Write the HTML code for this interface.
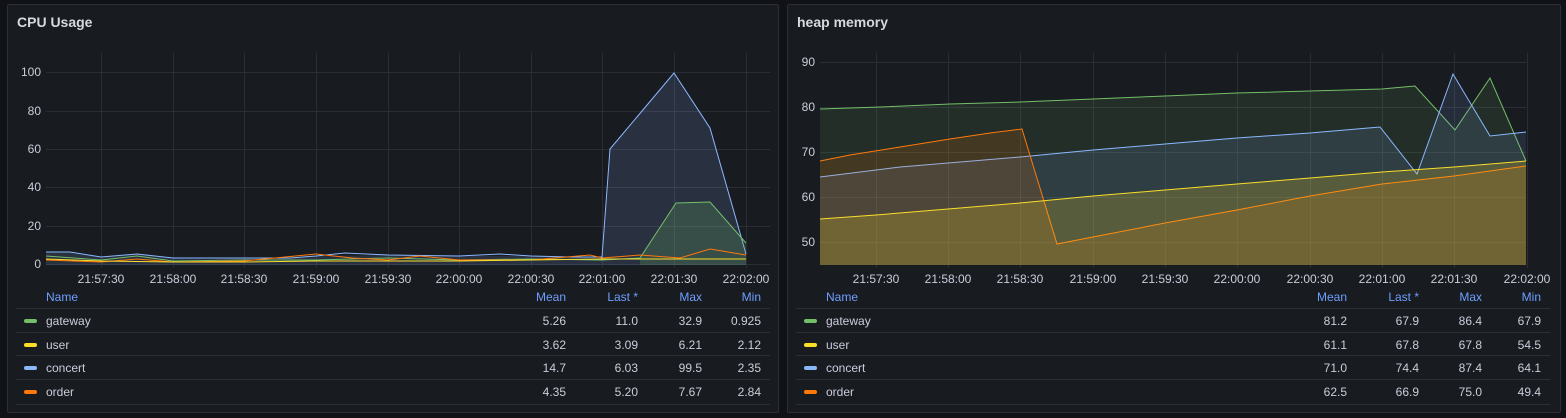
<!DOCTYPE html>
<html><head><style>
body{margin:0;width:1566px;height:418px;background:#111217;font-family:"Liberation Sans",sans-serif;overflow:hidden;position:relative}
.p{position:absolute;top:4px;height:407px;background:#181b1f;border:1px solid #2c2f35;border-radius:2px}
.t{position:absolute;left:9px;top:9px;color:#d8d9de;font-size:14px;font-weight:bold}
svg{position:absolute;left:0;top:0}
.lg{position:absolute;font-size:12px;color:#ccccdc}
.row{position:absolute;height:23px;border-top:1px solid #2c2f35;width:100%}
.h{color:#6e9fff;font-weight:normal}
.c{position:absolute;text-align:right;width:60px}
.sw{position:absolute;width:13px;height:4px;border-radius:2px;left:8px;top:10px}
</style></head><body>
<div class="p" style="left:7px;width:770px"><div class="t">CPU Usage</div></div>
<div class="p" style="left:787px;width:772px"><div class="t">heap memory</div></div>
<svg width="1566" height="418" font-family="Liberation Sans" font-size="12" fill="#ccccdc">
<g stroke="#2a2d33" stroke-width="1">
<line x1="46" x2="770" y1="72.5" y2="72.5"/><line x1="46" x2="770" y1="111.5" y2="111.5"/><line x1="46" x2="770" y1="149.5" y2="149.5"/><line x1="46" x2="770" y1="187.5" y2="187.5"/><line x1="46" x2="770" y1="226.5" y2="226.5"/><line x1="46" x2="770" y1="264.5" y2="264.5"/>
<line x1="101.5" x2="101.5" y1="53" y2="268"/><line x1="173.5" x2="173.5" y1="53" y2="268"/><line x1="244.5" x2="244.5" y1="53" y2="268"/><line x1="316.5" x2="316.5" y1="53" y2="268"/><line x1="388.5" x2="388.5" y1="53" y2="268"/><line x1="459.5" x2="459.5" y1="53" y2="268"/><line x1="531.5" x2="531.5" y1="53" y2="268"/><line x1="602.5" x2="602.5" y1="53" y2="268"/><line x1="674.5" x2="674.5" y1="53" y2="268"/><line x1="746.5" x2="746.5" y1="53" y2="268"/>
<line x1="820" x2="1526" y1="62.5" y2="62.5"/><line x1="820" x2="1526" y1="107.5" y2="107.5"/><line x1="820" x2="1526" y1="152.5" y2="152.5"/><line x1="820" x2="1526" y1="197.5" y2="197.5"/><line x1="820" x2="1526" y1="242.5" y2="242.5"/>
<line x1="876.5" x2="876.5" y1="53" y2="268"/><line x1="948.5" x2="948.5" y1="53" y2="268"/><line x1="1020.5" x2="1020.5" y1="53" y2="268"/><line x1="1093.5" x2="1093.5" y1="53" y2="268"/><line x1="1165.5" x2="1165.5" y1="53" y2="268"/><line x1="1237.5" x2="1237.5" y1="53" y2="268"/><line x1="1310.5" x2="1310.5" y1="53" y2="268"/><line x1="1382.5" x2="1382.5" y1="53" y2="268"/><line x1="1454.5" x2="1454.5" y1="53" y2="268"/><line x1="1527.5" x2="1527.5" y1="53" y2="268"/>
</g>
<g text-anchor="end"><text x="41" y="76">100</text><text x="41" y="115">80</text><text x="41" y="153">60</text><text x="41" y="191">40</text><text x="41" y="230">20</text><text x="41" y="268">0</text>
<text x="815" y="66">90</text><text x="815" y="111">80</text><text x="815" y="156">70</text><text x="815" y="201">60</text><text x="815" y="246">50</text></g>
<g text-anchor="middle"><text x="101" y="283">21:57:30</text><text x="173" y="283">21:58:00</text><text x="244" y="283">21:58:30</text><text x="316" y="283">21:59:00</text><text x="388" y="283">21:59:30</text><text x="459" y="283">22:00:00</text><text x="531" y="283">22:00:30</text><text x="602" y="283">22:01:00</text><text x="674" y="283">22:01:30</text><text x="746" y="283">22:02:00</text>
<text x="876" y="283">21:57:30</text><text x="948" y="283">21:58:00</text><text x="1020" y="283">21:58:30</text><text x="1093" y="283">21:59:00</text><text x="1165" y="283">21:59:30</text><text x="1237" y="283">22:00:00</text><text x="1310" y="283">22:00:30</text><text x="1382" y="283">22:01:00</text><text x="1454" y="283">22:01:30</text><text x="1527" y="283">22:02:00</text></g>
<!-- CPU -->
<path d="M46 252 L70 252 L101 257 L137 254 L173 258 L244 258 L290 258 L316 256 L388 255 L459 256 L531 256 L570 257 L602 257 L610 149 L674 73 L710 128 L746 254 L746 265 L46 265Z" fill="#8ab8ff" fill-opacity="0.15"/>
<path d="M46 252 L70 252 L101 257 L137 254 L173 258 L244 258 L290 258 L316 256 L345 253 L388 255 L459 256 L500 254 L531 256 L570 257 L602 257 L610 149 L674 73 L710 128 L746 254" fill="none" stroke="#8ab8ff" stroke-width="1"/>
<path d="M640 258 L676 203 L710 202 L746 243 L746 265 L640 265Z" fill="#73bf69" fill-opacity="0.2"/>
<path d="M46 256 L101 260 L137 256 L173 261 L244 260 L316 260 L388 258 L459 260 L531 259 L602 260 L640 258 L676 203 L710 202 L746 243" fill="none" stroke="#73bf69" stroke-width="1"/>
<path d="M46 260 L101 262 L137 259 L173 262 L244 261 L316 254 L352 258 L388 260 L420 256 L459 260 L531 260 L590 255 L602 258 L640 255 L680 258 L710 249 L746 255" fill="none" stroke="#ff780a" stroke-width="1"/>
<path d="M46 259 L101 261 L173 262 L244 262 L316 261 L388 261 L459 261 L531 260 L602 259 L674 259 L746 259" fill="none" stroke="#fade2a" stroke-width="1"/>
<!-- heap -->
<path d="M820 109 L880 107 L950 104 L1020 102 L1093 99 L1165 96 L1237 93 L1310 91 L1382 89 L1415 86 L1455 130 L1490 78 L1526 161 L1526 265 L820 265Z" fill="#73bf69" fill-opacity="0.12"/>
<path d="M820 109 L880 107 L950 104 L1020 102 L1093 99 L1165 96 L1237 93 L1310 91 L1382 89 L1415 86 L1455 130 L1490 78 L1526 161" fill="none" stroke="#73bf69"/>
<path d="M820 177 L900 167 L1020 157 L1093 150 L1165 144 L1237 138 L1310 133 L1380 127 L1417 174 L1453 74 L1490 136 L1526 132 L1526 265 L820 265Z" fill="#8ab8ff" fill-opacity="0.12"/>
<path d="M820 177 L900 167 L1020 157 L1093 150 L1165 144 L1237 138 L1310 133 L1380 127 L1417 174 L1453 74 L1490 136 L1526 132" fill="none" stroke="#8ab8ff"/>
<path d="M820 161 L850 155 L900 147 L950 139 L990 133 L1022 129 L1057 244 L1093 237 L1165 223 L1237 210 L1310 196 L1382 184 L1454 176 L1526 166 L1526 265 L820 265Z" fill="#ff780a" fill-opacity="0.15"/>
<path d="M820 161 L850 155 L900 147 L950 139 L990 133 L1022 129 L1057 244 L1093 237 L1165 223 L1237 210 L1310 196 L1382 184 L1454 176 L1526 166" fill="none" stroke="#ff780a"/>
<path d="M820 219 L876 215 L948 209 L1020 203 L1093 196 L1165 190 L1237 184 L1310 178 L1382 172 L1454 167 L1526 161 L1526 265 L820 265Z" fill="#fade2a" fill-opacity="0.2"/>
<path d="M820 219 L876 215 L948 209 L1020 203 L1093 196 L1165 190 L1237 184 L1310 178 L1382 172 L1454 167 L1526 161" fill="none" stroke="#fade2a"/>
</svg>
<div class="lg" style="left:16px;top:290px;width:754px">
<div class="h" style="position:absolute;left:30px">Name</div>
<div class="c h" style="left:490px">Mean</div><div class="c h" style="left:562px">Last *</div><div class="c h" style="left:626px">Max</div><div class="c h" style="left:685px">Min</div>
<div class="row" style="top:18px"><div class="sw" style="background:#73bf69"></div><span style="position:absolute;left:30px;top:5px">gateway</span><div class="c" style="left:490px;top:5px">5.26</div><div class="c" style="left:562px;top:5px">11.0</div><div class="c" style="left:626px;top:5px">32.9</div><div class="c" style="left:685px;top:5px">0.925</div></div>
<div class="row" style="top:42px"><div class="sw" style="background:#fade2a"></div><span style="position:absolute;left:30px;top:5px">user</span><div class="c" style="left:490px;top:5px">3.62</div><div class="c" style="left:562px;top:5px">3.09</div><div class="c" style="left:626px;top:5px">6.21</div><div class="c" style="left:685px;top:5px">2.12</div></div>
<div class="row" style="top:65px"><div class="sw" style="background:#8ab8ff"></div><span style="position:absolute;left:30px;top:5px">concert</span><div class="c" style="left:490px;top:5px">14.7</div><div class="c" style="left:562px;top:5px">6.03</div><div class="c" style="left:626px;top:5px">99.5</div><div class="c" style="left:685px;top:5px">2.35</div></div>
<div class="row" style="top:89px;height:24px;border-bottom:1px solid #2c2f35"><div class="sw" style="background:#ff780a"></div><span style="position:absolute;left:30px;top:5px">order</span><div class="c" style="left:490px;top:5px">4.35</div><div class="c" style="left:562px;top:5px">5.20</div><div class="c" style="left:626px;top:5px">7.67</div><div class="c" style="left:685px;top:5px">2.84</div></div>
</div>
<div class="lg" style="left:796px;top:290px;width:754px">
<div class="h" style="position:absolute;left:30px">Name</div>
<div class="c h" style="left:491px">Mean</div><div class="c h" style="left:563px">Last *</div><div class="c h" style="left:626px">Max</div><div class="c h" style="left:685px">Min</div>
<div class="row" style="top:18px"><div class="sw" style="background:#73bf69"></div><span style="position:absolute;left:30px;top:5px">gateway</span><div class="c" style="left:491px;top:5px">81.2</div><div class="c" style="left:563px;top:5px">67.9</div><div class="c" style="left:626px;top:5px">86.4</div><div class="c" style="left:685px;top:5px">67.9</div></div>
<div class="row" style="top:42px"><div class="sw" style="background:#fade2a"></div><span style="position:absolute;left:30px;top:5px">user</span><div class="c" style="left:491px;top:5px">61.1</div><div class="c" style="left:563px;top:5px">67.8</div><div class="c" style="left:626px;top:5px">67.8</div><div class="c" style="left:685px;top:5px">54.5</div></div>
<div class="row" style="top:65px"><div class="sw" style="background:#8ab8ff"></div><span style="position:absolute;left:30px;top:5px">concert</span><div class="c" style="left:491px;top:5px">71.0</div><div class="c" style="left:563px;top:5px">74.4</div><div class="c" style="left:626px;top:5px">87.4</div><div class="c" style="left:685px;top:5px">64.1</div></div>
<div class="row" style="top:89px;height:24px;border-bottom:1px solid #2c2f35"><div class="sw" style="background:#ff780a"></div><span style="position:absolute;left:30px;top:5px">order</span><div class="c" style="left:491px;top:5px">62.5</div><div class="c" style="left:563px;top:5px">66.9</div><div class="c" style="left:626px;top:5px">75.0</div><div class="c" style="left:685px;top:5px">49.4</div></div>
</div>
</body></html>
